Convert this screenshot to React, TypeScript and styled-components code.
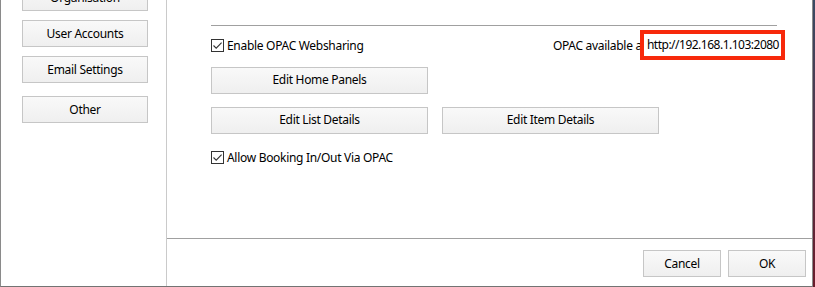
import React, { useState } from "react";
import styled, { createGlobalStyle } from "styled-components";

const GlobalStyle = createGlobalStyle`
  html, body {
    margin: 0;
    padding: 0;
    overflow: hidden;
    background: #2b2f3a;
  }
  * {
    box-sizing: border-box;
  }
`;

const Frame = styled.div`
  width: 815px;
  height: 287px;
  display: flex;
  background: linear-gradient(#3a4a63, #6a1b2a);
  font-family: "Noto Sans", "Open Sans", sans-serif;
  font-size: 12px;
  letter-spacing: -0.3px;
  color: #000;
`;

const Window = styled.div`
  width: 813px;
  height: 287px;
  display: flex;
  background: #fff;
  border-left: 1px solid #8a8a8a;
  border-right: 1px solid #8a8a8a;
  border-bottom: 1px solid #737373;
  overflow: hidden;
`;

const Sidebar = styled.div`
  width: 166px;
  flex-shrink: 0;
  display: flex;
  flex-direction: column;
  padding-left: 21px;
  border-right: 1px solid #cacaca;
`;

const Button = styled.button<{ $w?: number; $top?: number }>`
  width: ${(p) => p.$w ?? 126}px;
  height: 27px;
  margin-top: ${(p) => p.$top ?? 0}px;
  flex-shrink: 0;
  padding: 0;
  border: 1px solid #c6c6c6;
  background: linear-gradient(#f9f9f9, #efefef);
  font-family: inherit;
  font-size: 12px;
  letter-spacing: inherit;
  color: #000;
  line-height: 1;
`;

const Main = styled.div`
  flex: 1;
  display: flex;
  flex-direction: column;
`;

const Content = styled.div`
  flex: 1;
  display: flex;
  flex-direction: column;
  padding: 25px 36px 0 44px;
`;

const Rule = styled.div`
  height: 1px;
  width: 566px;
  background: #a0a0a0;
`;

const Row = styled.div<{ $top: number }>`
  display: flex;
  align-items: center;
  gap: 14px;
  margin-top: ${(p) => p.$top}px;
  height: 26px;
`;

const CheckRow = styled.label<{ $top: number }>`
  display: flex;
  align-items: center;
  gap: 3px;
  margin-top: ${(p) => p.$top}px;
  height: 20px;
  cursor: default;
`;

const Spacer = styled.div`
  flex: 1;
`;

const Available = styled.span`
  display: flex;
  align-items: center;
  white-space: nowrap;
`;

const Highlight = styled.span`
  position: relative;
  margin-left: -6px;
  margin-right: -8px;
  padding: 2px 2px 3px 3px;
  border: 4px solid #f7290b;
  background: #fff;
  letter-spacing: -0.5px;
`;

const Box = styled.span`
  width: 13px;
  height: 13px;
  display: inline-flex;
  align-items: center;
  justify-content: center;
  border: 1px solid #333;
  background: #fff;
`;

const Footer = styled.div`
  height: 48px;
  border-top: 1px solid #a0a0a0;
  display: flex;
  align-items: flex-start;
  justify-content: flex-end;
  gap: 7px;
  padding: 11px 7px 0 0;
`;

const Check = ({ checked, onClick }: { checked: boolean; onClick: () => void }) => (
  <Box onClick={onClick}>
    {checked && (
      <svg width="11" height="11" viewBox="0 0 11 11">
        <path d="M1.5 5.5 L4.2 8.2 L9.6 2.6" fill="none" stroke="#333" strokeWidth="1.1" />
      </svg>
    )}
  </Box>
);

const App = () => {
  const [share, setShare] = useState(true);
  const [booking, setBooking] = useState(true);

  return (
    <Frame>
      <GlobalStyle />
      <Window>
        <Sidebar>
          <Button $top={-16}>Organisation</Button>
          <Button $top={9}>User Accounts</Button>
          <Button $top={9}>Email Settings</Button>
          <Button $top={13}>Other</Button>
        </Sidebar>
        <Main>
          <Content>
            <Rule />
            <Row $top={6}>
              <CheckRow $top={0}>
                <Check checked={share} onClick={() => setShare(!share)} />
                Enable OPAC Websharing
              </CheckRow>
              <Spacer />
              <Available>
                OPAC available at
                <Highlight>http://192.168.1.103:2080</Highlight>
              </Available>
            </Row>
            <Row $top={9}>
              <Button $w={217}>Edit Home Panels</Button>
            </Row>
            <Row $top={14}>
              <Button $w={217}>Edit List Details</Button>
              <Button $w={217}>Edit Item Details</Button>
            </Row>
            <CheckRow $top={14}>
              <Check checked={booking} onClick={() => setBooking(!booking)} />
              Allow Booking In/Out Via OPAC
            </CheckRow>
          </Content>
          <Footer>
            <Button $w={78}>Cancel</Button>
            <Button $w={78}>OK</Button>
          </Footer>
        </Main>
      </Window>
    </Frame>
  );
};

export default App;
